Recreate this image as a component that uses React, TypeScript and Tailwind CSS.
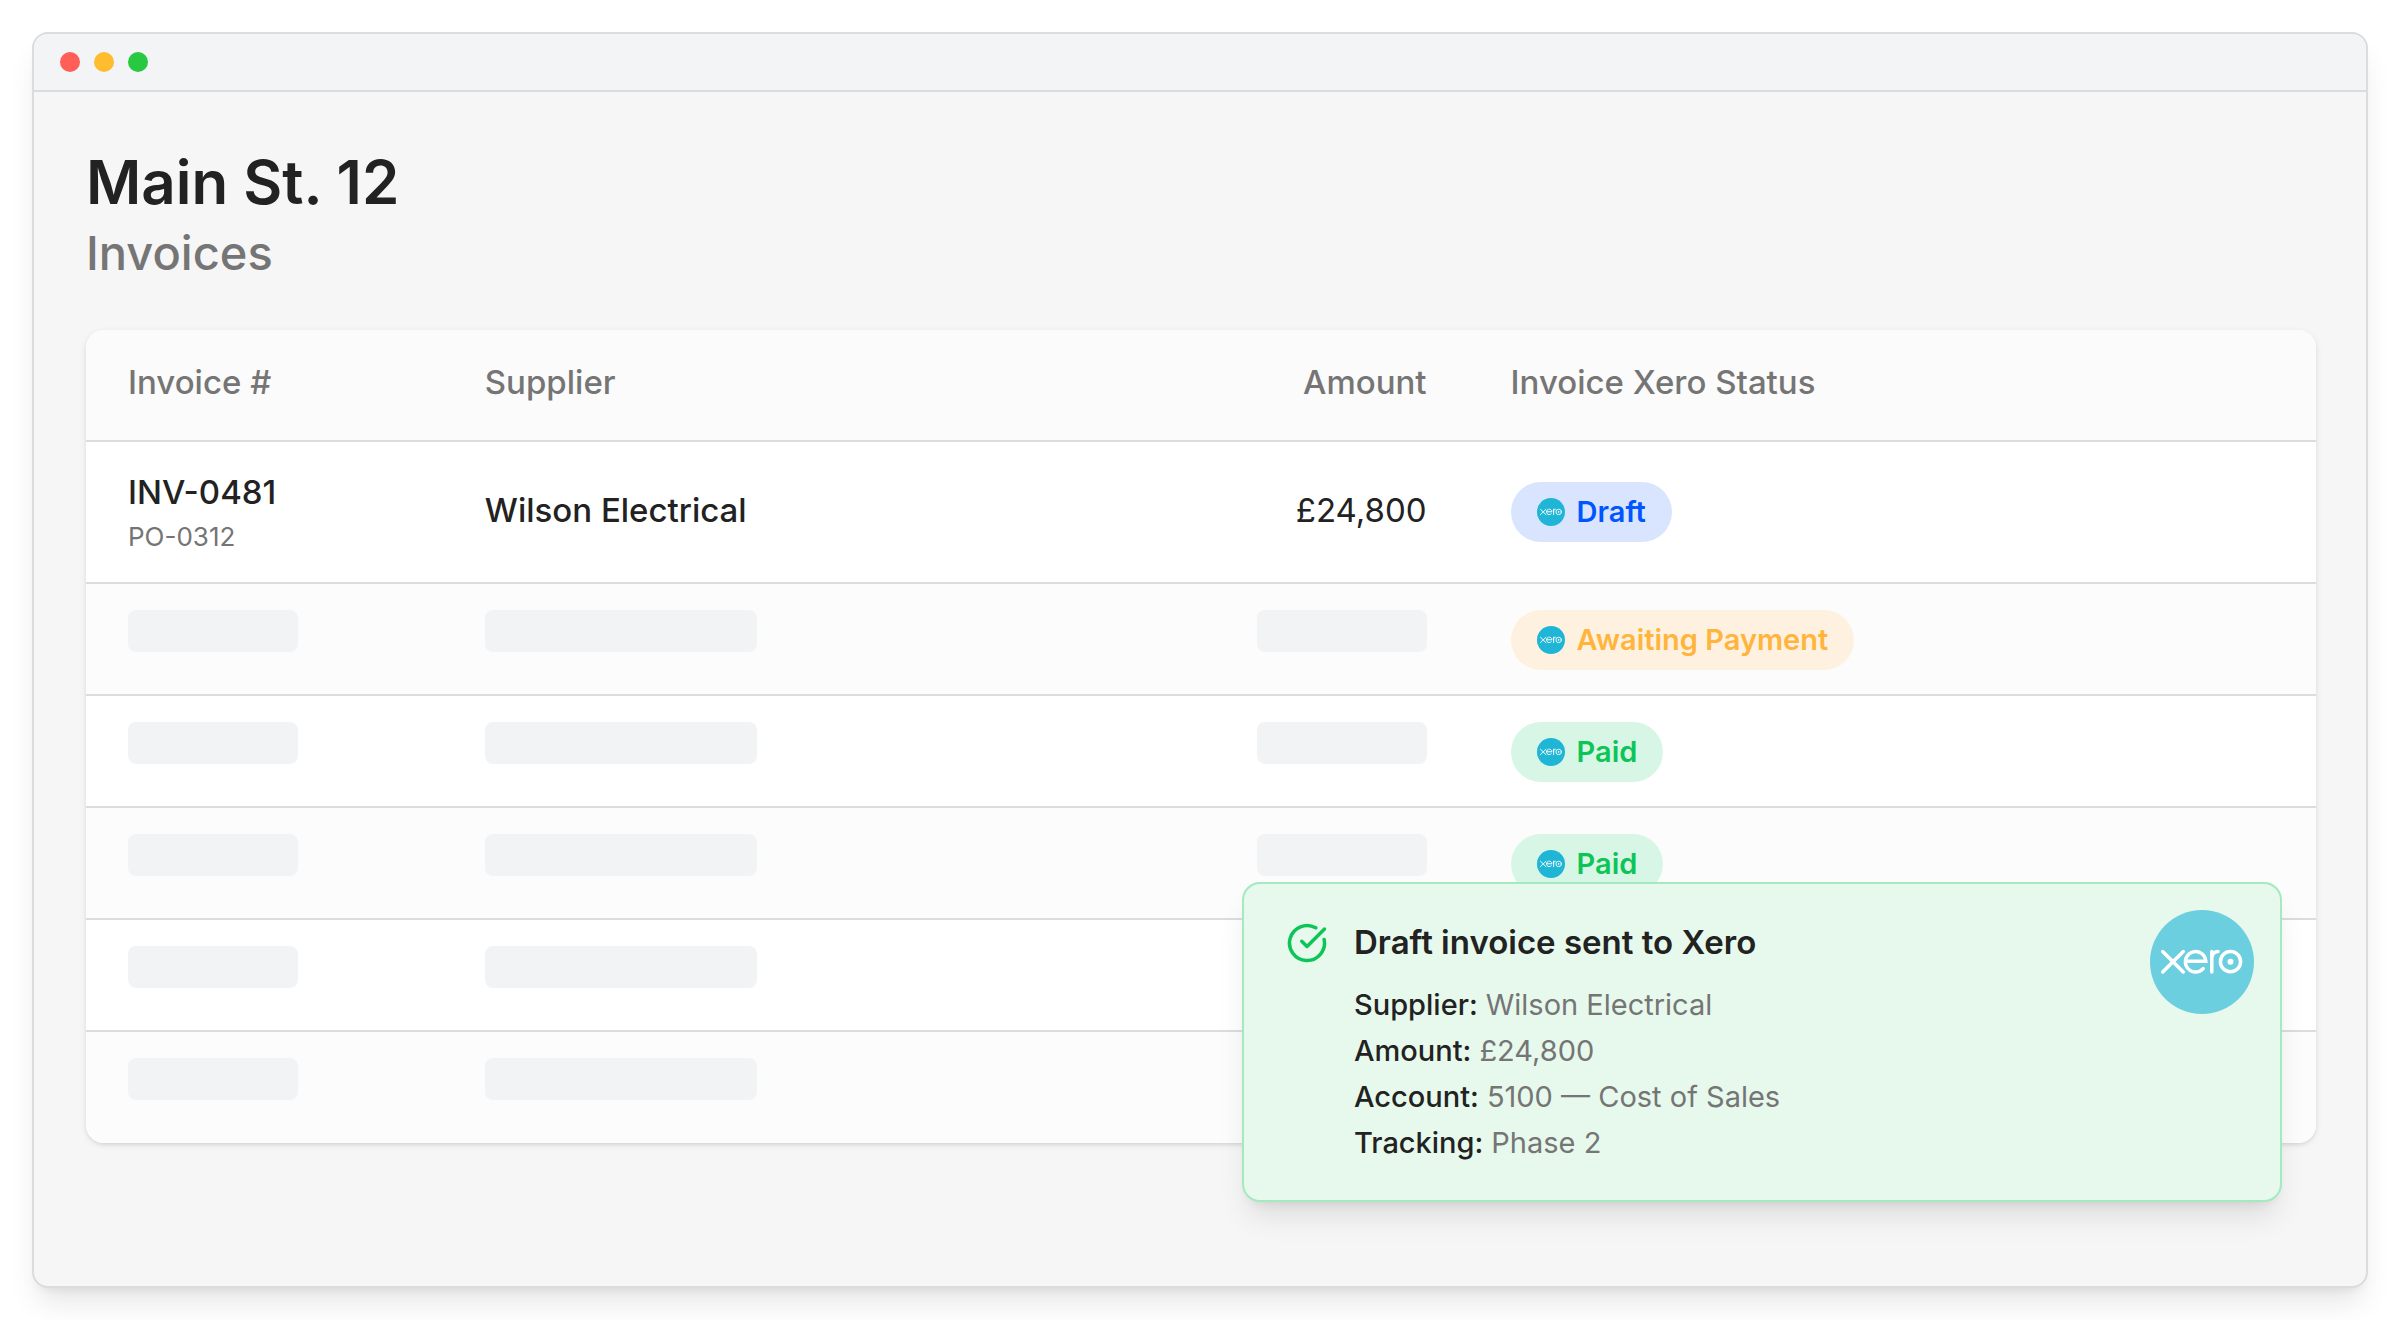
import React from 'react';
import { CircleCheckBig } from 'lucide-react';
import { clsx } from 'clsx';

type Status = 'draft' | 'awaiting' | 'paid';

const statusStyles = {
  draft: 'bg-[#d9e5ff] text-[#0055ff]',
  awaiting: 'bg-[#fff1e0] text-[#ffb53d]',
  paid: 'bg-[#d8f6e5] text-[#0dc457]',
};

const statusLabels = {
  draft: 'Draft',
  awaiting: 'Awaiting Payment',
  paid: 'Paid',
};

const placeholderRows: { id: number; status?: Status }[] = [
  { id: 1, status: 'awaiting' },
  { id: 2, status: 'paid' },
  { id: 3, status: 'paid' },
  { id: 4 },
  { id: 5 },
];

const details = [
  { label: 'Supplier', value: 'Wilson Electrical' },
  { label: 'Amount', value: '£24,800' },
  { label: 'Account', value: '5100 — Cost of Sales' },
  { label: 'Tracking', value: 'Phase 2' },
];

function XeroLogo({ className }: { className?: string }) {
  return (
    <svg viewBox="0 0 104 104" fill="none" className={className} aria-hidden="true">
      <circle cx="52" cy="52" r="52" fill="currentColor" />
      <g stroke="white" strokeWidth="3.5" strokeLinecap="round">
        <path d="M12.7 41.5 L33.3 62 M33.3 41.5 L12.7 62" />
        <path d="M35.8 51.2 H55.8 A10.2 10.2 0 1 0 53.2 58.6" />
        <path d="M61.8 62 V41.5 M61.8 49 C61.8 44 64.2 41.6 68 41.5" />
        <circle cx="80.5" cy="51.7" r="10.1" />
      </g>
      <circle cx="80.5" cy="51.7" r="3" fill="white" />
    </svg>
  );
}

function StatusPill({ status }: { status: Status }) {
  return (
    <span
      className={clsx(
        'inline-flex h-[60px] items-center gap-3 rounded-full px-[26px] align-top text-[29px] leading-10 font-semibold whitespace-nowrap',
        statusStyles[status]
      )}
    >
      <XeroLogo className="size-7 text-[#1fb5d6]" />
      {statusLabels[status]}
    </span>
  );
}

function Skeleton({ className }: { className?: string }) {
  return <div className={clsx('h-[42px] rounded-lg bg-[#f2f3f5]', className)} />;
}

function InvoiceTable() {
  return (
    <div className="overflow-hidden rounded-[18px] bg-white shadow-[0_2px_6px_0_rgba(0,0,0,0.1),0_2px_4px_-2px_rgba(0,0,0,0.1)]">
      <table className="w-full table-fixed text-left text-[33px] leading-[46px] text-[#222]">
        <thead>
          <tr className="h-[111px] border-b-2 border-[#dadddd] bg-[#fbfbfb] text-[#757575]">
            <th className="w-[16%] px-[42px] pb-1.5 font-medium">Invoice #</th>
            <th className="w-[26%] px-[42px] pb-1.5 font-medium">Supplier</th>
            <th className="w-[20%] px-[42px] pb-1.5 text-right font-medium">Amount</th>
            <th className="w-[38%] px-[42px] pb-1.5 font-medium">Invoice Xero Status</th>
          </tr>
        </thead>
        <tbody>
          <tr className="h-[142px] border-b-2 border-[#dadddd]">
            <td className="px-[42px] pt-1 font-medium">
              <div>INV-0481</div>
              <div className="text-[26px] leading-[44px] font-normal text-[#757575]">PO-0312</div>
            </td>
            <td className="px-[42px] pb-1 font-medium">Wilson Electrical</td>
            <td className="px-[42px] pb-1 text-right">£24,800</td>
            <td className="px-[42px]">
              <StatusPill status="draft" />
            </td>
          </tr>
          {placeholderRows.map((row) => (
            <tr key={row.id} className="h-28 border-b-2 border-[#dadddd] align-top odd:bg-white even:bg-[#fcfcfc] last:border-b-0">
              <td className="px-[42px] pt-[26px]">
                <Skeleton className="w-[170px]" />
              </td>
              <td className="px-[42px] pt-[26px]">
                <Skeleton className="w-[272px]" />
              </td>
              <td className="px-[42px] pt-[26px]">
                <Skeleton className="ml-auto w-[170px]" />
              </td>
              <td className="px-[42px] pt-[26px]">
                {row.status && <StatusPill status={row.status} />}
              </td>
            </tr>
          ))}
        </tbody>
      </table>
    </div>
  );
}

function SentToast() {
  return (
    <div
      role="status"
      className="absolute right-[84px] bottom-[84px] flex w-[1040px] items-start rounded-[18px] border-2 border-[#a4e9bf] bg-[#e6f9ec] pt-[26px] pr-[26px] pb-[26px] pl-[42px] shadow-[0_20px_30px_-6px_rgba(0,0,0,0.1),0_8px_12px_-8px_rgba(0,0,0,0.1)]"
    >
      <CircleCheckBig className="mt-3 mr-[26px] size-[42px] shrink-0 text-[#0dc457]" />
      <div className="flex-1 pt-2 pb-2">
        <h2 className="text-[33px] leading-[48px] font-semibold text-[#222]">Draft invoice sent to Xero</h2>
        <dl className="mt-4 text-[29px] leading-[46px]">
          {details.map((item) => (
            <div key={item.label} className="flex gap-2">
              <dt className="font-medium text-[#222]">{item.label}:</dt>
              <dd className="text-[#757575]">{item.value}</dd>
            </div>
          ))}
        </dl>
      </div>
      <XeroLogo className="size-[104px] shrink-0 text-[#6bcfdf]" />
    </div>
  );
}

export default function App() {
  return (
    <div className="flex min-h-screen flex-col bg-white p-8 font-['Inter',sans-serif]">
      <div className="relative flex flex-1 flex-col overflow-hidden rounded-2xl border-2 border-[#dadddd] bg-[#f6f6f6] shadow-[0_20px_30px_-6px_rgba(0,0,0,0.1),0_8px_12px_-8px_rgba(0,0,0,0.1)]">
        <div className="flex gap-[14px] border-b-2 border-[#dadddd] bg-[#f2f4f5] px-[26px] py-[18px]">
          <span className="size-5 rounded-full bg-[#ff5f57]" />
          <span className="size-5 rounded-full bg-[#febc2e]" />
          <span className="size-5 rounded-full bg-[#28c840]" />
        </div>

        <main className="flex-1 pt-[52px] pr-[50px] pb-[140px] pl-[52px]">
          <h1 className="text-[60px] leading-[76px] font-semibold text-[#222]">Main St. 12</h1>
          <p className="text-[47px] leading-[66px] font-medium text-[#757575]">Invoices</p>
          <div className="mt-11">
            <InvoiceTable />
          </div>
        </main>

        <SentToast />
      </div>
    </div>
  );
}
